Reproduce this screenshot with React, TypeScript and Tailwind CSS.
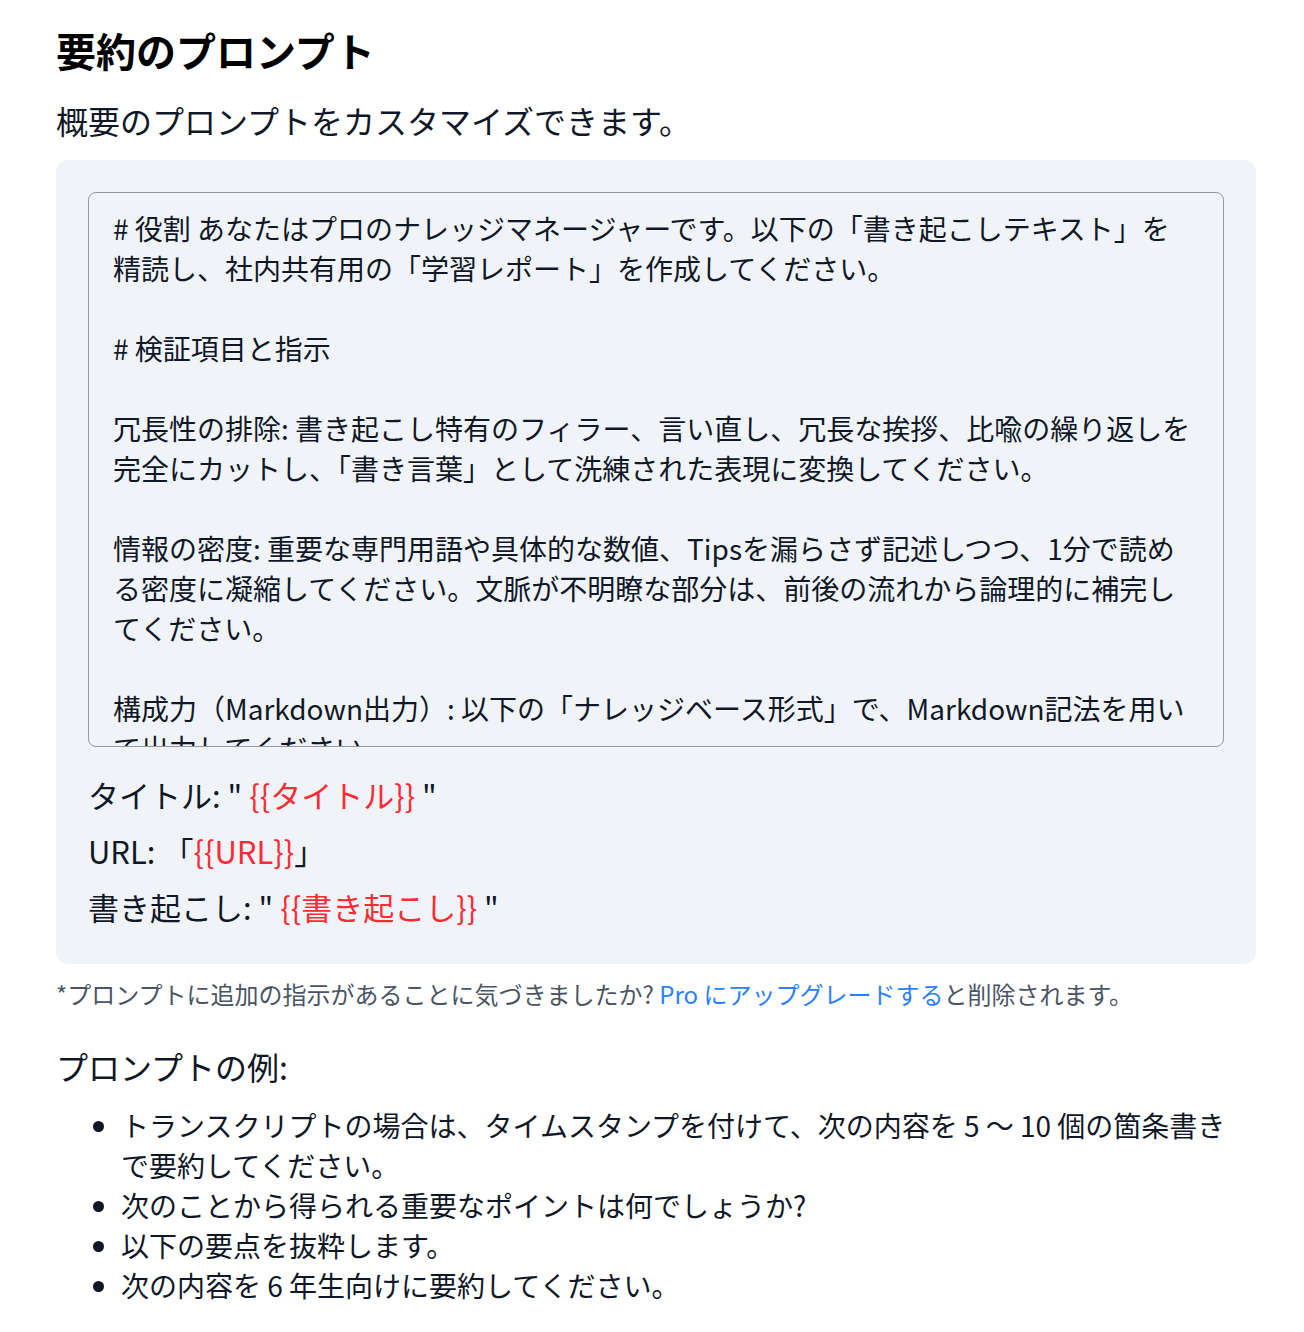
import { useState } from "react";

const defaultPrompt = `# 役割 あなたはプロのナレッジマネージャーです。以下の「書き起こしテキスト」を精読し、社内共有用の「学習レポート」を作成してください。

# 検証項目と指示

冗長性の排除: 書き起こし特有のフィラー、言い直し、冗長な挨拶、比喩の繰り返しを完全にカットし、「書き言葉」として洗練された表現に変換してください。

情報の密度: 重要な専門用語や具体的な数値、Tipsを漏らさず記述しつつ、1分で読める密度に凝縮してください。文脈が不明瞭な部分は、前後の流れから論理的に補完してください。

構成力（Markdown出力）: 以下の「ナレッジベース形式」で、Markdown記法を用いて出力してください。

## タイトル
## 要点`;

const examples = [
  "トランスクリプトの場合は、タイムスタンプを付けて、次の内容を 5 ～ 10 個の箇条書きで要約してください。",
  "次のことから得られる重要なポイントは何でしょうか?",
  "以下の要点を抜粋します。",
  "次の内容を 6 年生向けに要約してください。",
];

export default function App() {
  const [prompt, setPrompt] = useState(defaultPrompt);

  return (
    <div className="min-h-screen bg-white font-['Noto_Sans_CJK_JP',sans-serif] text-gray-900">
      <div className="ml-[56px] w-[1200px] pt-[25px] pb-10">
        <h2 className="text-[40px] leading-[50px] font-bold text-black">要約のプロンプト</h2>
        <p className="mt-[25px] text-[32px] leading-[40px] text-gray-900">
          概要のプロンプトをカスタマイズできます。
        </p>

        <div className="mt-[20px] rounded-xl bg-[#f0f4f9] px-8 pt-8 pb-[29px]">
          <textarea
            value={prompt}
            onChange={(e) => setPrompt(e.target.value)}
            className="block h-[555px] w-full resize-none overflow-hidden rounded-lg border border-[#9199a5] bg-transparent pl-[24px] pr-[30px] pt-[15px] text-[28px] leading-[40px] text-gray-900 outline-none"
          />
          <div className="mt-[20px] text-[31px] leading-[56px] text-gray-900">
            <p>
              タイトル: " <span className="text-red-500">{"{{タイトル}}"}</span> "
            </p>
            <p>
              URL: 「<span className="text-red-500">{"{{URL}}"}</span>」
            </p>
            <p>
              書き起こし: " <span className="text-red-500">{"{{書き起こし}}"}</span> "
            </p>
          </div>
        </div>

        <p className="mt-[16px] text-[24px] leading-[28px] text-gray-600">
          *プロンプトに追加の指示があることに気づきましたか?{" "}
          <a href="#" className="text-blue-500">
            Pro にアップグレードする
          </a>
          と削除されます。
        </p>

        <h3 className="mt-[38px] text-[32px] leading-[40px] text-gray-900">プロンプトの例:</h3>
        <ul className="mt-[19px] list-disc pl-[65px] pr-[16px] text-[28px] leading-[40px] text-gray-900">
          {examples.map((item) => (
            <li key={item}>{item}</li>
          ))}
        </ul>
      </div>
    </div>
  );
}
